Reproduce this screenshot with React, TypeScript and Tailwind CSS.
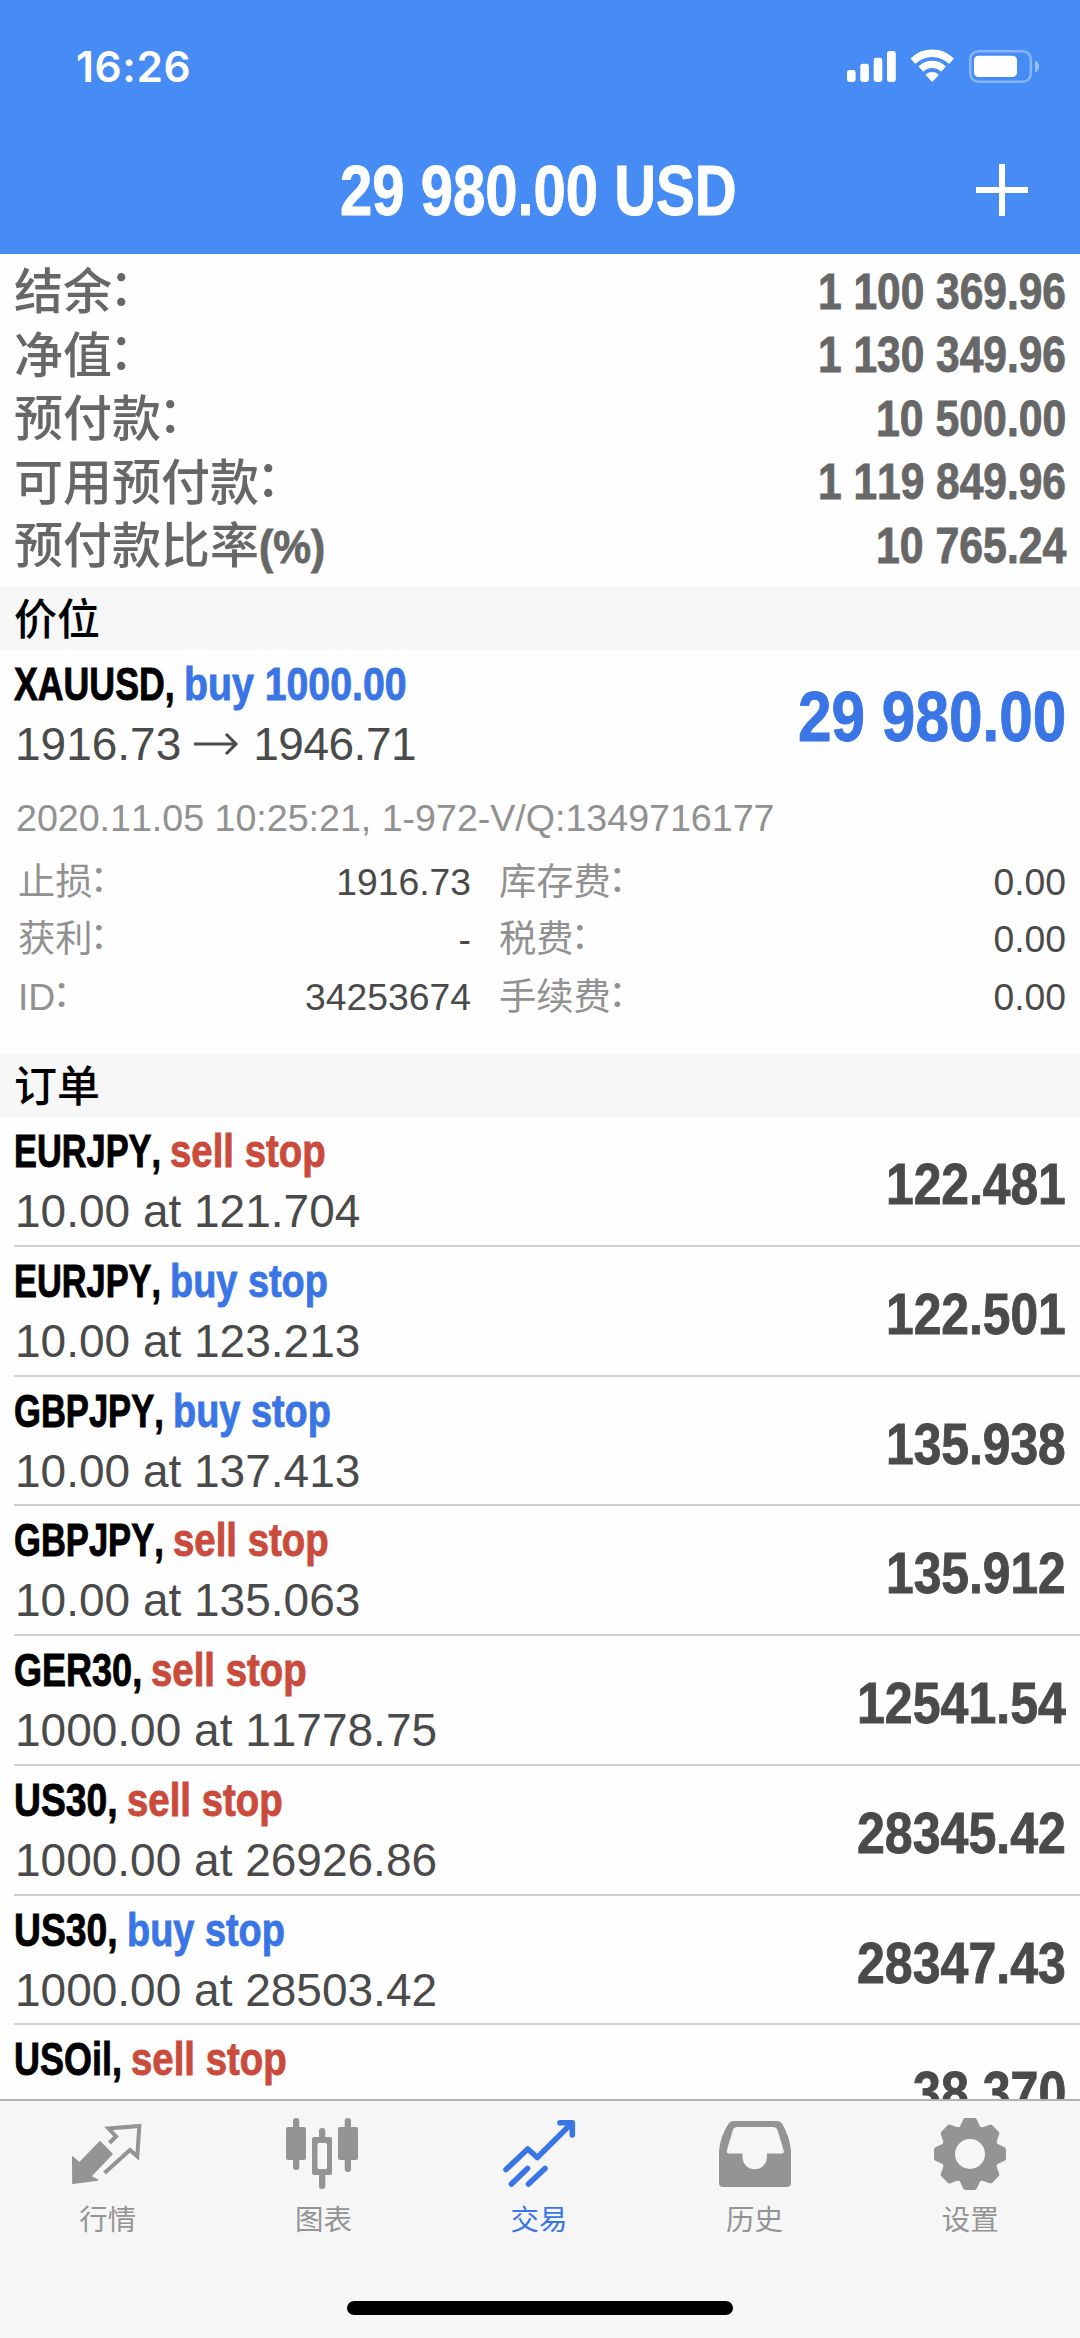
import { type ReactNode, useLayoutEffect, useRef, useState } from "react";

/** Text squeezed horizontally to an exact width, standing in for a condensed cut. */
function Condensed({ width, className = "", children }: { width: number; className?: string; children: ReactNode }) {
  const ref = useRef<HTMLSpanElement>(null);
  const [scale, setScale] = useState(0.8);
  useLayoutEffect(() => {
    if (ref.current) setScale(width / ref.current.offsetWidth);
  }, [width]);
  return (
    <span className={"block shrink-0 whitespace-nowrap font-bold [-webkit-text-stroke:0.9px_currentColor] " + className} style={{ width }}>
      <span ref={ref} className="inline-block origin-left" style={{ transform: `scaleX(${scale})` }}>
        {children}
      </span>
    </span>
  );
}

const summary = [
  { label: "结余", suffix: "：", value: "1 100 369.96", width: 248 },
  { label: "净值", suffix: "：", value: "1 130 349.96", width: 248 },
  { label: "预付款", suffix: "：", value: "10 500.00", width: 190 },
  { label: "可用预付款", suffix: "：", value: "1 119 849.96", width: 248 },
  { label: "预付款比率", suffix: "(%)", value: "10 765.24", width: 190 },
];

const orders = [
  { symbol: "EURJPY,", sw: 147, side: "sell stop", aw: 156, detail: "10.00 at 121.704", price: "122.481", pw: 180 },
  { symbol: "EURJPY,", sw: 147, side: "buy stop", aw: 158, detail: "10.00 at 123.213", price: "122.501", pw: 180 },
  { symbol: "GBPJPY,", sw: 150, side: "buy stop", aw: 158, detail: "10.00 at 137.413", price: "135.938", pw: 180 },
  { symbol: "GBPJPY,", sw: 150, side: "sell stop", aw: 156, detail: "10.00 at 135.063", price: "135.912", pw: 180 },
  { symbol: "GER30,", sw: 128, side: "sell stop", aw: 156, detail: "1000.00 at 11778.75", price: "12541.54", pw: 209 },
  { symbol: "US30,", sw: 104, side: "sell stop", aw: 156, detail: "1000.00 at 26926.86", price: "28345.42", pw: 209 },
  { symbol: "US30,", sw: 104, side: "buy stop", aw: 158, detail: "1000.00 at 28503.42", price: "28347.43", pw: 209 },
  { symbol: "USOil,", sw: 108, side: "sell stop", aw: 156, detail: "", price: "38.370", pw: 153 },
];

const fees = [
  ["止损", "1916.73", "库存费", "0.00"],
  ["获利", "-", "税费", "0.00"],
  ["ID", "34253674", "手续费", "0.00"],
];

function SectionTitle({ children }: { children: ReactNode }) {
  return (
    <h2 className="flex h-[63px] shrink-0 items-center bg-[#f7f7f7] pt-[4px] pl-[14px] text-[43px] leading-none font-medium text-black">
      {children}
    </h2>
  );
}

function StatusIcons() {
  return (
    <svg className="h-[36px] w-[196px]" viewBox="846 48 196 36" fill="#fff">
      <rect x="847" y="70" width="8.6" height="12" rx="2.4" />
      <rect x="860.3" y="63.8" width="8.6" height="18.2" rx="2.4" />
      <rect x="873.7" y="57.7" width="8.6" height="24.3" rx="2.4" />
      <rect x="887" y="51" width="8.8" height="31" rx="2.4" />
      <path d="M911.500 58.500 A30 30 0 0 1 952.900 58.500 L949 63 A24 24 0 0 0 915.400 63 Z" strokeLinejoin="round" stroke="#fff" strokeWidth="1.500" />
      <path d="M919.500 66.500 A18.500 18.500 0 0 1 944.900 66.500 L941 70.700 A13 13 0 0 0 923.400 70.700 Z" strokeLinejoin="round" stroke="#fff" strokeWidth="1.500" />
      <path d="M926.500 74.800 A9 9 0 0 1 937.900 74.800 L932.200 81 Z" strokeLinejoin="round" stroke="#fff" strokeWidth="1.500" />
      <rect x="970.300" y="51.300" width="60.500" height="30.400" rx="8" fill="none" stroke="#fff" strokeOpacity="0.35" strokeWidth="2.600" />
      <rect x="974" y="55.700" width="43" height="21.300" rx="4.500" />
      <path d="M1035 60.500 Q1039 62 1039 66.500 Q1039 71 1035 72.500 Z" fillOpacity="0.45" />
    </svg>
  );
}

const iconQuotes = (
  <svg className="h-[76px] w-[76px]" viewBox="70 2116 76 76" fill="none">
    <path d="M72.700 2157 L79.500 2163 L100 2141.800 L112 2154 L90.500 2176.500 L97.500 2180 L73 2183.300 Z" fill="#949494" stroke="#949494" strokeWidth="1.600" strokeLinejoin="round" />
    <path d="M109.500 2143 L116 2136.500 L108.500 2128.500 L139.300 2126 L137.300 2156.500 L130 2150 L104.500 2173" stroke="#949494" strokeWidth="4" />
  </svg>
);

const iconCharts = (
  <svg className="h-[76px] w-[76px]" viewBox="286 2116 76 76" fill="#949494">
    <rect x="294" y="2118" width="6.300" height="52" rx="3" />
    <rect x="287" y="2127" width="20" height="33" rx="2" />
    <rect x="345.700" y="2118" width="6.300" height="54" rx="3" />
    <rect x="339" y="2127" width="20" height="33" rx="2" />
    <rect x="320" y="2128" width="6.300" height="12" rx="3" />
    <rect x="320" y="2172" width="6.300" height="17" rx="3" />
    <path fillRule="evenodd" d="M315 2137h16q2 0 2 2v34q0 2-2 2h-16q-2 0-2-2v-34q0-2 2-2z M320 2143q-1.500 0-1.500 1.500v23q0 1.500 1.500 1.500h6.500q1.500 0 1.500-1.500v-23q0-1.500-1.500-1.500z" />
  </svg>
);

const iconTrade = (
  <svg className="h-[76px] w-[76px]" viewBox="501 2116 76 76" fill="none" stroke="#3a75e6" strokeWidth="5.600" strokeLinecap="round" strokeLinejoin="round">
    <path d="M506 2169.500 L527.800 2149 L537.300 2157.500 L571 2124" />
    <path d="M560 2122.800 H572.300 V2135" />
    <path d="M511.500 2184 L527.500 2168.500" />
    <path d="M528.500 2184 L545 2168.500" />
  </svg>
);

const iconHistory = (
  <svg className="h-[76px] w-[76px]" viewBox="717 2116 76 76" fill="#949494">
    <path fillRule="evenodd" d="M733.500 2121 H777 q3.500 0 5.500 3.500 Q789.500 2136 791 2151 V2183 q0 4-4 4 H723 q-4 0-4-4 V2151 Q720.500 2136 728 2124.500 q2-3.500 5.500-3.500z M737.500 2127 q-3.500 0-4.700 3 L727 2150 q-1 3.500 2.500 3.500 H742.500 V2157 a12.200 12.200 0 0 0 24.400 0 V2153.500 H781 q3.500 0 2.500-3.500 L777.500 2130 q-1.200-3-4.700-3z" />
  </svg>
);

const iconSettings = (
  <svg className="h-[76px] w-[76px]" viewBox="933 2116 76 76">
    <g fill="#949494" stroke="#949494" strokeWidth="5" strokeLinejoin="round">
      {[0, 45, 90, 135, 180, 225, 270, 315].map((a) => (
        <path key={a} d="M962 2130 L966.500 2120.500 H975.500 L980 2130 Z" transform={`rotate(${a} 971 2154)`} />
      ))}
    </g>
    <circle cx="971" cy="2154" r="22" fill="none" stroke="#949494" strokeWidth="14" />
  </svg>
);

const tabs = [
  { label: "行情", icon: iconQuotes, color: "text-[#949494]" },
  { label: "图表", icon: iconCharts, color: "text-[#949494]" },
  { label: "交易", icon: iconTrade, color: "text-[#3a75e6]" },
  { label: "历史", icon: iconHistory, color: "text-[#949494]" },
  { label: "设置", icon: iconSettings, color: "text-[#949494]" },
];

export default function App() {
  return (
    <div className="flex h-[2338px] w-[1080px] flex-col overflow-hidden bg-[#fefefe] font-['Liberation_Sans','Noto_Sans_CJK_SC',sans-serif] [font-kerning:none]">
      <header className="h-[254px] shrink-0 bg-[#478bf4] text-white">
        <div className="flex h-[132px] items-center justify-between pr-[38px] pl-[76px]">
          <time className="pt-[2px] font-['Inter'] text-[42.500px] leading-none font-semibold tracking-[0.6px]">16:26</time>
          <StatusIcons />
        </div>
        <div className="grid h-[116px] grid-cols-[1fr_auto_1fr] items-center pr-[4px]">
          <span />
          <Condensed width={397} className="pt-[2px] text-[70px] leading-none">29 980.00 USD</Condensed>
          <svg className="mr-[48px] h-[52px] w-[52px] justify-self-end" viewBox="0 0 52 52" stroke="#fff" strokeWidth="6">
            <path d="M0 26H52M26 0V52" />
          </svg>
        </div>
      </header>

      <section className="h-[333px] shrink-0 pt-[6px] pr-[14px] pl-[14px] text-[#676767]">
        {summary.map((row) => (
          <div key={row.label} className="flex h-[63.500px] items-center justify-between">
            <div className="flex items-center pt-[2px] text-[49px] leading-none font-medium">
              {row.label}
              {row.suffix === "：" ? (
                <span className="-translate-x-[3px] -translate-y-[4px]">：</span>
              ) : (
                <Condensed width={66} className="text-[47px]">{row.suffix}</Condensed>
              )}
            </div>
            <Condensed width={row.width} className="text-[50px] leading-none">{row.value}</Condensed>
          </div>
        ))}
      </section>

      <SectionTitle>价位</SectionTitle>

      <section className="h-[404px] shrink-0 pr-[14px] pl-[14px]">
        <div className="flex h-[128px] items-center justify-between">
          <div>
            <div className="flex gap-[9px] text-[47px] leading-[60px]">
              <Condensed width={161} className="text-black">XAUUSD,</Condensed>
              <Condensed width={223} className="text-[#3a75e6]">buy 1000.00</Condensed>
            </div>
            <div className="flex items-center pl-px text-[46px] leading-[60px] text-[#4a4a4a]">
              1916.73
              <svg className="mr-[14px] ml-[13px] h-[24px] w-[45px]" viewBox="0 0 45 24" fill="none" stroke="#4a4a4a" strokeWidth="3">
                <path d="M0 12H42M32 2L42 12L32 22" />
              </svg>
              <span className="tracking-[-0.5px]">1946.71</span>
            </div>
          </div>
          <Condensed width={268} className="pt-[6px] text-[70px] leading-none text-[#3a75e6]">29 980.00</Condensed>
        </div>
        <p className="mt-[18px] pl-[2px] text-[37.600px] leading-[44px] text-[#919191]">2020.11.05 10:25:21, 1-972-V/Q:1349716177</p>
        <div className="mt-[14px] pl-[4px] text-[37.300px]">
          {fees.map(([a, b, c, d]) => (
            <div key={a} className="grid h-[57.500px] grid-cols-[453px_1fr_auto] items-center text-[#4a4a4a]">
              <div className="flex items-center justify-between">
                <span className="flex text-[#919191]">
                  {a}
                  <span className="-translate-x-[3px] -translate-y-[3px]">：</span>
                </span>
                <span>{b}</span>
              </div>
              <span className="flex pl-[28px] text-[#919191]">
                {c}
                <span className="-translate-x-[3px] -translate-y-[3px]">：</span>
              </span>
              <span>{d}</span>
            </div>
          ))}
        </div>
      </section>

      <SectionTitle>订单</SectionTitle>

      <section className="min-h-0 flex-1 overflow-hidden">
        {orders.map((o, i) => (
          <div key={i} className="ml-[14px] flex h-[129.750px] items-start justify-between border-b-2 border-[#d0d0d0] pr-[14px]">
            <div className="pt-[4px]">
              <div className="flex gap-[9px] text-[47px] leading-[60px]">
                <Condensed width={o.sw} className="text-black">{o.symbol}</Condensed>
                <Condensed width={o.aw} className={o.side.startsWith("buy") ? "text-[#3a75e6]" : "text-[#ca4b3c]"}>{o.side}</Condensed>
              </div>
              <div className="pl-px text-[46px] leading-[60px] text-[#4a4a4a]">{o.detail}</div>
            </div>
            <Condensed width={o.pw} className="pt-[2px] text-[58px] leading-[129px] text-[#4a4a4a]">{o.price}</Condensed>
          </div>
        ))}
      </section>

      <footer className="flex h-[239px] shrink-0 flex-col items-center border-t-2 border-[#b2b2b2] bg-[#f6f6f6]">
        <nav className="grid h-[200px] w-full grid-cols-5 pt-[15px] pr-[2px]">
          {tabs.map((t) => (
            <div key={t.label} className={"flex flex-col items-center gap-[12px] text-[28.500px] leading-[32px] " + t.color}>
              {t.icon}
              {t.label}
            </div>
          ))}
        </nav>
        <div className="h-[14px] w-[386px] rounded-full bg-black" />
      </footer>
    </div>
  );
}
